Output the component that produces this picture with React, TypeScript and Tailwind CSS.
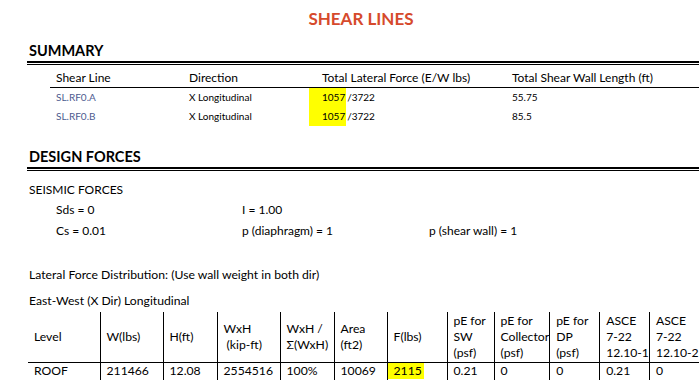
const summaryRows = [
  { line: "SL.RF0.A", dir: "X Longitudinal", force: "1057", total: "/3722", length: "55.75" },
  { line: "SL.RF0.B", dir: "X Longitudinal", force: "1057", total: "/3722", length: "85.5" },
];

const headers = [
  ["Level"],
  ["W(lbs)"],
  ["H(ft)"],
  ["WxH", "\u00a0(kip-ft)"],
  ["WxH /", "Σ(WxH)"],
  ["Area", "(ft2)"],
  ["F(lbs)"],
  ["pE for", "SW", "(psf)"],
  ["pE for", "Collector", "(psf)"],
  ["pE for", "DP", "(psf)"],
  ["ASCE", "7-22", "12.10-1"],
  ["ASCE", "7-22", "12.10-2"],
];

const widths = [72, 63, 54, 63, 54, 53, 60, 47, 54, 50, 49, 60];

const roof = ["ROOF", "211466", "12.08", "2554516", "100%", "10069", "2115", "0.21", "0", "0", "0.21", "0"];

const DoubleRule = () => (
  <div className="mt-[2px] h-[4px] border-t-2 border-b border-black" />
);

const App = () => {
  return (
    <div className="h-[380px] w-[699px] overflow-hidden bg-white font-['Lato',sans-serif] text-black">
      <div className="w-[722px]">
        <h1 className="pt-[9px] text-center text-[17px] font-bold leading-[20px] text-[#d64a2c]">
          SHEAR LINES
        </h1>

        <div className="ml-[27px] mt-[12px]">
          <h2 className="pl-[2px] pt-[2px] text-[14.5px] font-bold leading-[16px]">SUMMARY</h2>
          <DoubleRule />

          <div className="ml-[23px]">
            <div className="flex h-[23px] items-center border-b border-black pt-[3px] text-[12px]">
              <span className="w-[133px] pl-[6px]">Shear Line</span>
              <span className="w-[133px] pl-[6px]">Direction</span>
              <span className="w-[190px] pl-[6px]">Total Lateral Force (E/W lbs)</span>
              <span className="pl-[6px]">Total Shear Wall Length (ft)</span>
            </div>
            {summaryRows.map((r) => (
              <div key={r.line} className="flex h-[19px] items-stretch text-[10px]">
                <span className="flex w-[133px] items-center pl-[6px] text-[#4d5b8f]">{r.line}</span>
                <span className="flex w-[133px] items-center pl-[6px]">{r.dir}</span>
                <span className="flex w-[190px] items-stretch pl-[6px]">
                  <span className="-ml-[13px] flex items-center bg-[#ffff00] pl-[13px] pr-[1px]">{r.force}</span>
                  <span className="flex items-center pl-[1px]">{r.total}</span>
                </span>
                <span className="flex items-center pl-[6px]">{r.length}</span>
              </div>
            ))}
          </div>

          <h2 className="mt-[21px] pl-[2px] pt-[2px] text-[14.5px] font-bold leading-[16px]">DESIGN FORCES</h2>
          <DoubleRule />

          <div className="mt-[11px] pl-[2px] text-[12px] leading-[16px]">SEISMIC FORCES</div>
          <div className="ml-[29px] mt-[1px] text-[12px]">
            <div className="flex h-[21px] items-center">
              <span className="w-[186px]">Sds = 0</span>
              <span>I = 1.00</span>
            </div>
            <div className="flex h-[21px] items-center">
              <span className="w-[186px]">Cs = 0.01</span>
              <span className="w-[187px]">p (diaphragm) = 1</span>
              <span>p (shear wall) = 1</span>
            </div>
          </div>

          <div className="mt-[26px] pl-[2px] text-[12.2px] leading-[16px]">
            Lateral Force Distribution: (Use wall weight in both dir)
          </div>
          <div className="mt-[10px] pl-[2px] text-[12.2px] leading-[16px]">
            East-West (X Dir) Longitudinal
          </div>

          <table className="ml-[1px] mt-[3px] table-fixed border-collapse text-[12.2px] leading-[16px]">
            <colgroup>
              {widths.map((w, i) => (
                <col key={i} style={{ width: w }} />
              ))}
            </colgroup>
            <thead>
              <tr className="h-[50px]">
                {headers.map((h, i) => (
                  <th
                    key={i}
                    className={`whitespace-nowrap border-b border-black pl-[6px] pt-[1px] text-left align-middle font-normal ${
                      i > 0 ? "border-l" : ""
                    }`}
                  >
                    {h.map((t, j) => (
                      <div key={j}>{t}</div>
                    ))}
                  </th>
                ))}
              </tr>
            </thead>
            <tbody>
              <tr className="h-[18px]">
                {roof.map((v, i) => (
                  <td
                    key={i}
                    className={`whitespace-nowrap pl-[6px] align-middle ${i > 0 ? "border-l border-black" : ""}`}
                  >
                    {i === 6 ? (
                      <span className="-ml-[6px] inline-block bg-[#ffff00] pl-[6px] pr-[2px]">{v}</span>
                    ) : (
                      v
                    )}
                  </td>
                ))}
              </tr>
            </tbody>
          </table>
        </div>
      </div>
    </div>
  );
};

export default App;
